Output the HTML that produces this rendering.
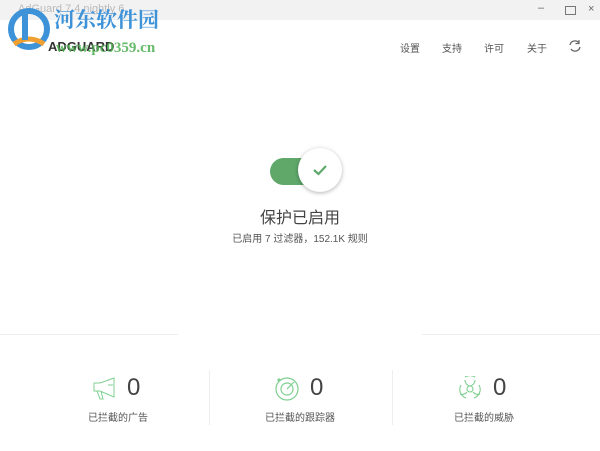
<!DOCTYPE html>
<html><head><meta charset="utf-8"><style>
body{margin:0;width:600px;height:451px;background:#fff;font-family:"Liberation Sans","Noto Sans CJK SC",sans-serif;position:relative;overflow:hidden}
.a{position:absolute}
.t{font-size:10px;color:#555}
.lbl{font-size:10px;color:#555;width:120px;text-align:center}
.num{font-size:24px;color:#444}
</style></head><body>
<div class="a" style="left:0;top:0;width:600px;height:20px;background:#f2f2f2"></div>
<div class="a" style="left:18px;top:3px;font-size:11px;color:#bbb">AdGuard 7.4 nightly 6</div>
<div class="a" style="left:538px;top:2px;font-size:11px;color:#666">–</div>
<div class="a" style="left:565px;top:6px;width:9px;height:7px;border:1px solid #777"></div>
<div class="a" style="left:588px;top:3px;font-size:11px;color:#666">×</div>
<svg class="a" style="left:4px;top:4px" width="50" height="50"><circle cx="25" cy="25" r="18" fill="none" stroke="#3d92d8" stroke-width="6"/><path d="M10 40 Q25 30 40 40" stroke="#f0a030" stroke-width="5" fill="none"/><rect x="18" y="10" width="6" height="26" fill="#3d92d8"/></svg>
<div class="a" style="left:54px;top:4px;font-size:21px;font-weight:bold;color:#3d92d8;font-family:'Noto Serif CJK SC',serif">河东软件园</div>
<div class="a" style="left:48px;top:39px;font-size:13px;font-weight:bold;color:#333">ADGUARD</div>
<div class="a" style="left:56px;top:40px;font-size:15px;font-weight:bold;color:#4caf50;font-family:'Liberation Serif',serif;opacity:.85">www.pc0359.cn</div>
<div class="a t" style="left:400px;top:40px">设置</div>
<div class="a t" style="left:442px;top:40px">支持</div>
<div class="a t" style="left:484px;top:40px">许可</div>
<div class="a t" style="left:527px;top:40px">关于</div>
<svg class="a" style="left:568px;top:39px" width="14" height="14" viewBox="0 0 14 14"><path d="M2 6 A5 5 0 0 1 11 4 M12 8 A5 5 0 0 1 3 10" fill="none" stroke="#666" stroke-width="1.3"/><path d="M11 1 V4.5 H7.5" fill="none" stroke="#666" stroke-width="1.2"/></svg>
<div class="a" style="left:270px;top:158px;width:50px;height:27px;border-radius:14px;background:#5fa86a"></div>
<div class="a" style="left:298px;top:148px;width:44px;height:44px;border-radius:50%;background:#fff;box-shadow:0 1px 4px rgba(0,0,0,.3)"></div>
<svg class="a" style="left:311px;top:162px" width="18" height="16"><path d="M3 8 L7.5 12 L15 4" fill="none" stroke="#5fa86a" stroke-width="2.2"/></svg>
<div class="a" style="left:200px;top:204px;width:200px;text-align:center;font-size:16px;color:#444">保护已启用</div>
<div class="a" style="left:180px;top:230px;width:240px;text-align:center;font-size:10px;color:#555">已启用 7 过滤器，152.1K 规则</div>
<div class="a" style="left:0;top:334px;width:178px;height:1px;background:#eee"></div>
<div class="a" style="left:422px;top:334px;width:178px;height:1px;background:#eee"></div>
<div class="a" style="left:209px;top:370px;width:1px;height:55px;background:#eee"></div>
<div class="a" style="left:392px;top:370px;width:1px;height:55px;background:#eee"></div>
<svg class="a" style="left:92px;top:377px" width="26" height="24" fill="none" stroke="#7fcf90" stroke-width="1"><path d="M2 6 H8 L22 1 V20 L8 14 H2 Z M5 14 L8 22 H11 L9 14 M16 8 H21"/></svg>
<div class="a num" style="left:127px;top:374px">0</div>
<div class="a lbl" style="left:58px;top:409px">已拦截的广告</div>
<svg class="a" style="left:274px;top:376px" width="26" height="26" fill="none" stroke="#7fcf90" stroke-width="1.2"><circle cx="13" cy="13" r="11"/><circle cx="13" cy="13" r="6"/><path d="M13 13 L20 6"/><circle cx="5" cy="4" r="1" fill="#7fcf90"/></svg>
<div class="a num" style="left:310px;top:374px">0</div>
<div class="a lbl" style="left:240px;top:409px">已拦截的跟踪器</div>
<svg class="a" style="left:457px;top:376px" width="26" height="26" fill="none" stroke="#7fcf90" stroke-width="1.1"><circle cx="13" cy="13" r="3"/><path d="M8 4 A6 6 0 0 0 13 10 A6 6 0 0 0 18 4 M3 18 A6 6 0 0 0 10 16 M23 18 A6 6 0 0 1 16 16 M4 9 A9 9 0 0 0 9 22 M22 9 A9 9 0 0 1 17 22 M8 1 A10 10 0 0 1 18 1"/></svg>
<div class="a num" style="left:493px;top:374px">0</div>
<div class="a lbl" style="left:424px;top:409px">已拦截的威胁</div>
</body></html>
